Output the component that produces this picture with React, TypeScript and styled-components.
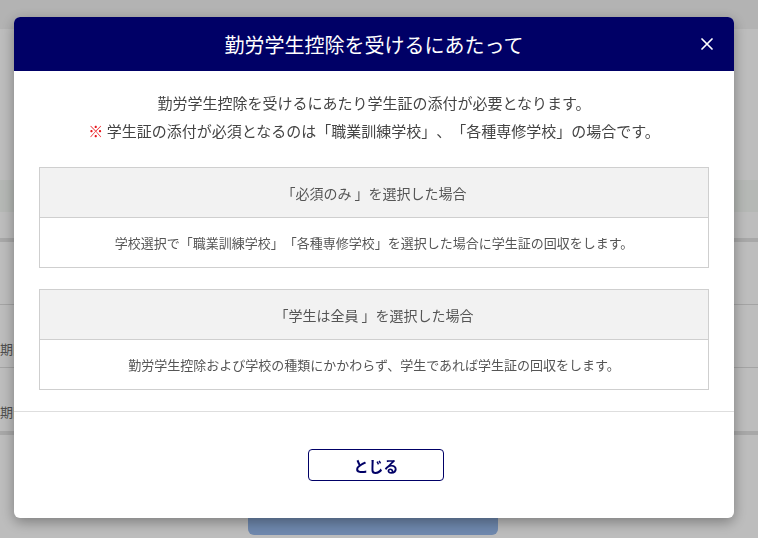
import React from "react";
import styled, { createGlobalStyle } from "styled-components";

type Case = {
  title: string;
  detail: string;
};

const cases: Case[] = [
  {
    title: "「必須のみ 」を選択した場合",
    detail:
      "学校選択で「職業訓練学校」「各種専修学校」を選択した場合に学生証の回収をします。",
  },
  {
    title: "「学生は全員 」を選択した場合",
    detail:
      "勤労学生控除および学校の種類にかかわらず、学生であれば学生証の回収をします。",
  },
];

const App = () => {
  return (
    <>
      <GlobalStyle />
      <Page>
        <TopBar />
        <Blank $height={151} />
        <NoticeBand />
        <Blank $height={26} />
        <ThickRule />
        <Row />
        <Row>
          <RowLabel>期間</RowLabel>
        </Row>
        <Row $last>
          <RowLabel>期間</RowLabel>
        </Row>
        <ThickRule />
        <ButtonArea>
          <PageButton>登録</PageButton>
        </ButtonArea>
      </Page>

      <Overlay>
        <Modal>
          <ModalHeader>
            <span />
            <ModalTitle>勤労学生控除を受けるにあたって</ModalTitle>
            <CloseButton aria-label="close">
              <svg width="12" height="12" viewBox="0 0 12 12">
                <path
                  d="M1 1 L11 11 M11 1 L1 11"
                  stroke="#fff"
                  strokeWidth="1.7"
                  strokeLinecap="round"
                />
              </svg>
            </CloseButton>
          </ModalHeader>

          <ModalBody>
            <Message>
              <p>勤労学生控除を受けるにあたり学生証の添付が必要となります。</p>
              <p>
                <Mark>※</Mark> 学生証の添付が必須となるのは「職業訓練学校」、「各種専修学校」の場合です。
              </p>
            </Message>

            <CaseList>
              {cases.map((c) => (
                <CaseBox key={c.title}>
                  <CaseTitle>{c.title}</CaseTitle>
                  <CaseDetail>{c.detail}</CaseDetail>
                </CaseBox>
              ))}
            </CaseList>
          </ModalBody>

          <ModalFooter>
            <CloseTextButton>とじる</CloseTextButton>
          </ModalFooter>
        </Modal>
      </Overlay>
    </>
  );
};

const GlobalStyle = createGlobalStyle`
  html, body {
    margin: 0;
    padding: 0;
    height: 100%;
    overflow: hidden;
  }
  body {
    font-family: "Noto Sans CJK JP", "Noto Sans", sans-serif;
    color: #333;
    text-spacing-trim: space-all;
  }
  p {
    margin: 0;
  }
`;

const Page = styled.div`
  width: 758px;
  height: 538px;
  display: flex;
  flex-direction: column;
  background: #fff;
`;

const TopBar = styled.div`
  height: 29px;
  background: #f2f2f2;
`;

const Blank = styled.div<{ $height: number }>`
  height: ${(p) => p.$height}px;
`;

const NoticeBand = styled.div`
  height: 32px;
  background: #f5f9f5;
`;

const ThickRule = styled.div`
  height: 4px;
  background: #e3e3e3;
`;

const Row = styled.div<{ $last?: boolean }>`
  height: 63px;
  box-sizing: border-box;
  padding-top: 36px;
  border-bottom: ${(p) => (p.$last ? "none" : "1px solid #dedede")};
`;

const RowLabel = styled.span`
  display: block;
  font-size: 13px;
  line-height: 16px;
  color: #6a6a6a;
`;

const ButtonArea = styled.div`
  flex: 1;
  display: flex;
  align-items: flex-end;
  padding: 0 0 3px 248px;
`;

const PageButton = styled.div`
  width: 250px;
  height: 40px;
  border-radius: 6px;
  background: #96b8eb;
  color: #fff;
`;

const Overlay = styled.div`
  position: fixed;
  inset: 0;
  background: rgba(0, 0, 0, 0.26);
  padding: 17px 0 0 14px;
`;

const Modal = styled.div`
  width: 720px;
  background: #fff;
  border-radius: 6px;
  overflow: hidden;
  box-shadow: 0 4px 14px rgba(0, 0, 0, 0.35);
`;

const ModalHeader = styled.div`
  height: 54px;
  display: grid;
  grid-template-columns: 54px 1fr 54px;
  align-items: center;
  background: #000066;
`;

const ModalTitle = styled.h2`
  margin: 0;
  text-align: center;
  font-size: 20px;
  font-weight: 400;
  color: #fff;
`;

const CloseButton = styled.button`
  width: 54px;
  height: 54px;
  display: flex;
  align-items: center;
  justify-content: center;
  padding: 0 1px 0 0;
  margin: 0;
  border: none;
  background: transparent;
  cursor: pointer;
`;

const ModalBody = styled.div`
  padding: 18px 25px 21px;
`;

const Message = styled.div`
  text-align: center;
  font-size: 15px;
  line-height: 28px;
  color: #444;
`;

const Mark = styled.span`
  color: #e8141a;
`;

const CaseList = styled.div`
  margin-top: 22px;
  display: flex;
  flex-direction: column;
  gap: 21px;
`;

const CaseBox = styled.div`
  border: 1px solid #cfcfcf;
`;

const CaseTitle = styled.div`
  height: 49px;
  display: flex;
  align-items: center;
  justify-content: center;
  background: #f2f2f2;
  border-bottom: 1px solid #cfcfcf;
  font-size: 14px;
  color: #555;
`;

const CaseDetail = styled.div`
  height: 49px;
  display: flex;
  align-items: center;
  justify-content: center;
  font-size: 13px;
  color: #555;
`;

const ModalFooter = styled.div`
  border-top: 1px solid #dedede;
  padding: 37px 0;
  display: flex;
  justify-content: center;
`;

const CloseTextButton = styled.button`
  width: 136px;
  height: 32px;
  margin-left: 4px;
  border: 1px solid #000066;
  border-radius: 4px;
  background: #fff;
  color: #000066;
  font-family: "Noto Sans CJK JP", "Noto Sans", sans-serif;
  font-size: 15px;
  font-weight: 700;
  cursor: pointer;
`;

export default App;
